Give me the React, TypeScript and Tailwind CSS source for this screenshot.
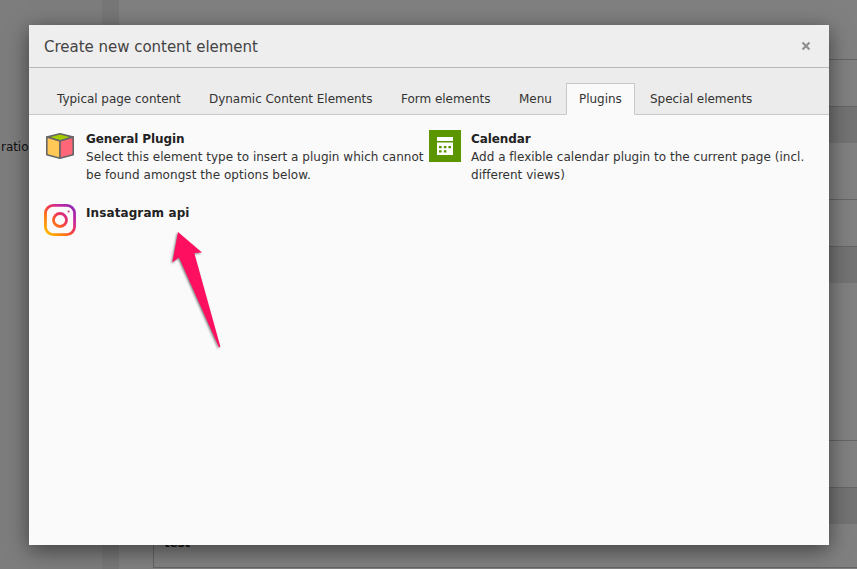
import React from "react";

const tabs = [
  { label: "Typical page content", box: "w-[150px]" },
  { label: "Dynamic Content Elements", box: "w-[190px]" },
  { label: "Form elements", box: "w-[116px]" },
  { label: "Menu", box: "w-[58px]" },
  { label: "Plugins", box: "w-[69px]", active: true },
  { label: "Special elements", box: "w-[128px]" },
];

function CubeIcon() {
  return (
    <svg width="32" height="32" viewBox="0 0 32 32" className="shrink-0" stroke="#666" strokeWidth="1.6" strokeLinejoin="round">
      <path d="M2.8 7.1 16 3.8l13.2 3.3L16 11z" fill="#a4cc00" />
      <path d="M2.8 7.1L16 11v17.2L2.8 24.8z" fill="#ffc857" />
      <path d="M29.2 7.1L16 11v17.2l13.2-3.4z" fill="#ff6678" />
    </svg>
  );
}

function CalendarIcon() {
  return (
    <svg width="32" height="32" viewBox="0 0 32 32" className="shrink-0">
      <path fill="#5b9500" d="M0 0h32v32H0z" />
      <path fill="#fff" d="M8 7h16v4H8zM8 12.6h16V25H8z" />
      <path fill="#5b9500" d="M10 16h2.6v2.2H10zM14.8 16h2.6v2.2h-2.6zM19.4 16H22v2.2h-2.6zM10 20.2h2.6v2.4H10zM14.8 20.2h2.6v2.4h-2.6z" />
    </svg>
  );
}

function InstagramIcon() {
  return (
    <svg width="32" height="32" viewBox="0 0 32 32" fill="none" className="shrink-0">
      <defs>
        <linearGradient id="ig" x1="2" y1="30" x2="30" y2="2" gradientUnits="userSpaceOnUse">
          <stop stopColor="#ffc000" />
          <stop offset=".3" stopColor="#ff7a12" />
          <stop offset=".52" stopColor="#f63a4b" />
          <stop offset=".75" stopColor="#c528a0" />
          <stop offset="1" stopColor="#8b2bb5" />
        </linearGradient>
      </defs>
      <rect x="1.45" y="1.45" width="29.1" height="29.1" rx="7.8" stroke="url(#ig)" strokeWidth="2.8" />
      <circle cx="16" cy="16" r="6.5" stroke="url(#ig)" strokeWidth="2.8" />
      <circle cx="24.6" cy="7.5" r="1.1" fill="#dc3a70" />
    </svg>
  );
}

function Backdrop() {
  return (
    <div className="flex h-full">
      <div className="w-[102px] bg-[#7d7d7d] pl-px pt-[138px] text-[12px] leading-[18px] tracking-[-0.05px] text-[#111]">
        ratio
      </div>
      <div className="w-[17px] bg-[#777]" />
      <div className="flex-1 bg-[#808080] pl-[34px]">
        <div className="h-[59px]" />
        <div className="h-[509px] border-b border-l border-t border-[#646464]">
          <div className="h-[47px] border-b border-[#646464]" />
          <div className="h-[36px] bg-[#737373]" />
          <div className="h-[57px] border-b border-[#646464]" />
          <div className="h-[47px] border-b border-[#646464]" />
          <div className="h-[36px] bg-[#737373]" />
          <div className="h-[158px] border-b border-[#646464]" />
          <div className="h-[47px] border-b border-[#646464]" />
          <div className="h-[36px] bg-[#737373]" />
          <div className="pl-[10px] pt-[10px] text-[12px] font-bold leading-[18px] tracking-[-0.2px] text-[#111]">test</div>
        </div>
      </div>
    </div>
  );
}

export default function App() {
  return (
    <div className="relative h-[569px] w-[857px] overflow-hidden bg-[#808080] font-['Verdana','DejaVu_Sans',sans-serif] text-[#333]">
      <Backdrop />
      <div className="absolute left-[29px] top-[25px] flex h-[520px] w-[800px] flex-col bg-[#fafafa] shadow-[0_5px_20px_rgba(0,0,0,0.5)]">
        <header className="flex h-[43px] items-center justify-between border-b border-[#b9b9b9] bg-[#eee] pl-[15px] pr-[18px]">
          <h1 className="whitespace-nowrap pt-px text-[15px] leading-[20px] tracking-[-0.02px] text-[#444]">Create new content element</h1>
          <svg width="10" height="10" viewBox="0 0 10 10" className="text-[#8d8d8d]">
            <path d="M1.5 1.5l7 7M8.5 1.5l-7 7" stroke="currentColor" strokeWidth="2.1" />
          </svg>
        </header>
        <nav className="flex h-[47px] shrink-0 items-end gap-[2px] border-b border-[#c8c8c8] bg-[#ececec] pl-[15px] text-[12px] tracking-[-0.03px]">
          {tabs.map((t) => (
            <div
              key={t.label}
              className={`${t.box} flex shrink-0 whitespace-nowrap border px-[12px] pt-[6px] leading-[18px] ${
                t.active ? "-mb-px h-[32px] border-[#c8c8c8] border-b-[#fafafa] bg-[#fafafa]" : "h-[31px] border-transparent"
              }`}
            >
              {t.label}
            </div>
          ))}
        </nav>
        <main className="grid grid-cols-[385px_385px] grid-rows-[74px_40px] pl-[15px] pt-[15px] text-[12px] leading-[18px] tracking-[0.02px]">
          <div className="flex gap-[10px]">
            <CubeIcon />
            <div className="whitespace-nowrap">
              <div className="font-bold tracking-[-0.08px] text-[#222]">General Plugin</div>
              <div>Select this element type to insert a plugin which cannot</div>
              <div className="tracking-[0.05px]">be found amongst the options below.</div>
            </div>
          </div>
          <div className="flex gap-[10px]">
            <CalendarIcon />
            <div className="whitespace-nowrap">
              <div className="font-bold tracking-[-0.08px] text-[#222]">Calendar</div>
              <div>Add a flexible calendar plugin to the current page (incl.</div>
              <div>different views)</div>
            </div>
          </div>
          <div className="flex gap-[10px]">
            <InstagramIcon />
            <div className="font-bold tracking-[0.1px] text-[#222]">Insatagram api</div>
          </div>
        </main>
      </div>
      <svg className="absolute left-[160px] top-[220px] drop-shadow-[-1px_1px_1px_rgba(0,0,0,0.5)]" width="80" height="140" viewBox="160 220 80 140">
        <path d="M178 232l24 20.5-7.7.5 26 93.5-1.3 1-40-90-6.7 5z" fill="#ff0f5f" />
      </svg>
    </div>
  );
}
